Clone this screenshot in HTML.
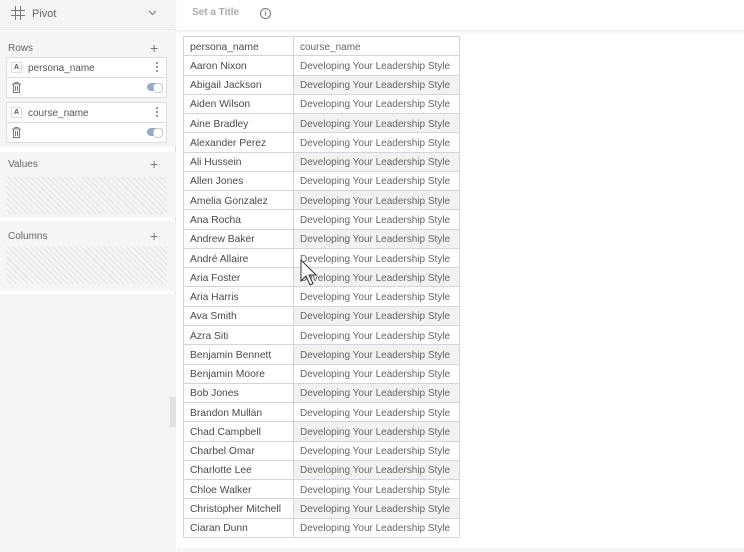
<!DOCTYPE html>
<html><head><meta charset="utf-8"><style>
*{margin:0;padding:0;box-sizing:border-box}
body{width:744px;height:552px;background:#fff;font-family:"Liberation Sans",sans-serif;position:relative;overflow:hidden;color:#555}
.side{position:absolute;left:0;top:0;width:176px;height:552px;background:#fff;border-right:1px solid #ddd}
.sec{position:absolute;left:0;width:176px;background:#f5f5f5}
.lbl{position:absolute;left:8px;font-size:10px;color:#666}
.plus{position:absolute;left:150px;font-size:14px;color:#777;line-height:10px}
.card{position:absolute;left:6px;width:161px;height:41px;background:#fff;border:1px solid #ddd}
.card .top{height:20px;border-bottom:1px solid #ddd;position:relative}
.card .a{position:absolute;left:4px;top:4px;width:11px;height:11px;border:1px solid #ddd;font-size:7px;text-align:center;line-height:10px;color:#555;font-weight:bold}
.card .t{position:absolute;left:21px;top:5px;font-size:10px;color:#555}
.card .dots{position:absolute;left:149px;top:3px;width:2px;height:12px;background:radial-gradient(circle,#777 0.9px,transparent 1px) 0 0/2px 4px}
.tog{position:absolute;left:140px;top:5px;width:16px;height:8px;border-radius:4px;background:#9aaac4}
.tog:after{content:"";position:absolute;right:0;top:0;width:8px;height:8px;border-radius:4px;background:#fff;border:1px solid #ccc}
.hatch{position:absolute;left:6px;width:161px;background:repeating-linear-gradient(45deg,#f5f5f5 0,#f5f5f5 3px,#e4e4e4 3px,#e4e4e4 4px)}
table{position:absolute;left:183px;top:36px;border-collapse:collapse;height:502px;font-size:10px}
td{border:1px solid #d4d4dc;padding:2px 6px 0;white-space:nowrap}
td.n{width:110px;color:#4a4a4a;font-size:10.3px}
td.c{width:166px;color:#666}
tr.alt td.c{background:#f2f2f2}
</style></head><body>
<div class="side">
 <div class="sec" style="top:0;height:30px;background:#f4f4f4;border-bottom:1px solid #e6e6e6">
  <svg style="position:absolute;left:11px;top:6px" width="14" height="14" viewBox="0 0 14 14" stroke="#777" stroke-width="1" fill="none"><path d="M4.5 0v14M9.5 0v14M0 4.5h14M0 9.5h14"/></svg>
  <div style="position:absolute;left:32px;top:8px;font-size:11px;color:#666">Pivot</div>
  <svg style="position:absolute;left:148px;top:10px" width="9" height="6" viewBox="0 0 9 6" stroke="#777" fill="none"><path d="M1 1l3.5 3.5L8 1"/></svg>
 </div>
 <div class="sec" style="top:31px;height:116px">
  <div class="lbl" style="top:12px">Rows</div><div class="plus" style="top:12px">+</div>
 </div>
 <div class="card" style="top:57px"><div class="top"><div class="a">A</div><div class="t">persona_name</div><div class="dots"></div></div>
  <svg style="position:absolute;left:5px;top:24px" width="9" height="11" viewBox="0 0 9 11" stroke="#777" fill="none" stroke-width="1"><path d="M0 2h9M3 2V0.5h3V2M1.5 2v8.5h6V2M3.5 4v5M5.5 4v5"/></svg><div class="tog" style="top:25px"></div></div>
 <div class="card" style="top:102px"><div class="top"><div class="a">A</div><div class="t">course_name</div><div class="dots"></div></div>
  <svg style="position:absolute;left:5px;top:24px" width="9" height="11" viewBox="0 0 9 11" stroke="#777" fill="none" stroke-width="1"><path d="M0 2h9M3 2V0.5h3V2M1.5 2v8.5h6V2M3.5 4v5M5.5 4v5"/></svg><div class="tog" style="top:25px"></div></div>
 <div class="sec" style="top:152px;height:65px"><div class="lbl" style="top:7px">Values</div><div class="plus" style="top:7px">+</div></div>
 <div class="hatch" style="top:177px;height:37px"></div>
 <div class="sec" style="top:221px;height:70px"><div class="lbl" style="top:10px">Columns</div><div class="plus" style="top:10px">+</div></div>
 <div class="hatch" style="top:246px;height:38px"></div>
 <div class="sec" style="top:294px;height:258px"></div>
 <div style="position:absolute;left:170px;top:397px;width:6px;height:30px;background:#e2e2e2"></div>
</div>
<div style="position:absolute;left:177px;top:0;width:567px;height:31px;border-bottom:1px solid #eee;box-shadow:0 1px 2px #f0f0f0">
 <div style="position:absolute;left:15px;top:7px;font-size:10px;font-weight:bold;color:#aaa">Set a Title</div>
 <div style="position:absolute;left:83px;top:8px;width:11px;height:11px;border:1px solid #777;border-radius:50%;font-size:8px;line-height:9px;text-align:center;color:#666">i</div>
</div>
<div style="position:absolute;left:177px;top:548px;width:567px;height:4px;background:#f5f5f5"></div>
<table>
<tr><td class="n">persona_name</td><td class="c">course_name</td></tr>
<tr><td class="n">Aaron Nixon</td><td class="c">Developing Your Leadership Style</td></tr>
<tr class="alt"><td class="n">Abigail Jackson</td><td class="c">Developing Your Leadership Style</td></tr>
<tr><td class="n">Aiden Wilson</td><td class="c">Developing Your Leadership Style</td></tr>
<tr class="alt"><td class="n">Aine Bradley</td><td class="c">Developing Your Leadership Style</td></tr>
<tr><td class="n">Alexander Perez</td><td class="c">Developing Your Leadership Style</td></tr>
<tr class="alt"><td class="n">Ali Hussein</td><td class="c">Developing Your Leadership Style</td></tr>
<tr><td class="n">Allen Jones</td><td class="c">Developing Your Leadership Style</td></tr>
<tr class="alt"><td class="n">Amelia Gonzalez</td><td class="c">Developing Your Leadership Style</td></tr>
<tr><td class="n">Ana Rocha</td><td class="c">Developing Your Leadership Style</td></tr>
<tr class="alt"><td class="n">Andrew Baker</td><td class="c">Developing Your Leadership Style</td></tr>
<tr><td class="n">André Allaire</td><td class="c">Developing Your Leadership Style</td></tr>
<tr class="alt"><td class="n">Aria Foster</td><td class="c">Developing Your Leadership Style</td></tr>
<tr><td class="n">Aria Harris</td><td class="c">Developing Your Leadership Style</td></tr>
<tr class="alt"><td class="n">Ava Smith</td><td class="c">Developing Your Leadership Style</td></tr>
<tr><td class="n">Azra Siti</td><td class="c">Developing Your Leadership Style</td></tr>
<tr class="alt"><td class="n">Benjamin Bennett</td><td class="c">Developing Your Leadership Style</td></tr>
<tr><td class="n">Benjamin Moore</td><td class="c">Developing Your Leadership Style</td></tr>
<tr class="alt"><td class="n">Bob Jones</td><td class="c">Developing Your Leadership Style</td></tr>
<tr><td class="n">Brandon Mullan</td><td class="c">Developing Your Leadership Style</td></tr>
<tr class="alt"><td class="n">Chad Campbell</td><td class="c">Developing Your Leadership Style</td></tr>
<tr><td class="n">Charbel Omar</td><td class="c">Developing Your Leadership Style</td></tr>
<tr class="alt"><td class="n">Charlotte Lee</td><td class="c">Developing Your Leadership Style</td></tr>
<tr><td class="n">Chloe Walker</td><td class="c">Developing Your Leadership Style</td></tr>
<tr class="alt"><td class="n">Christopher Mitchell</td><td class="c">Developing Your Leadership Style</td></tr>
<tr><td class="n">Ciaran Dunn</td><td class="c">Developing Your Leadership Style</td></tr>
</table>
<svg style="position:absolute;left:300px;top:259px" width="18" height="28" viewBox="0 0 18 28"><path d="M1 1v21l5-5 4 9 3-1.5-4-8.5h7z" fill="#fff" stroke="#333" stroke-width="1"/></svg>
</body></html>
